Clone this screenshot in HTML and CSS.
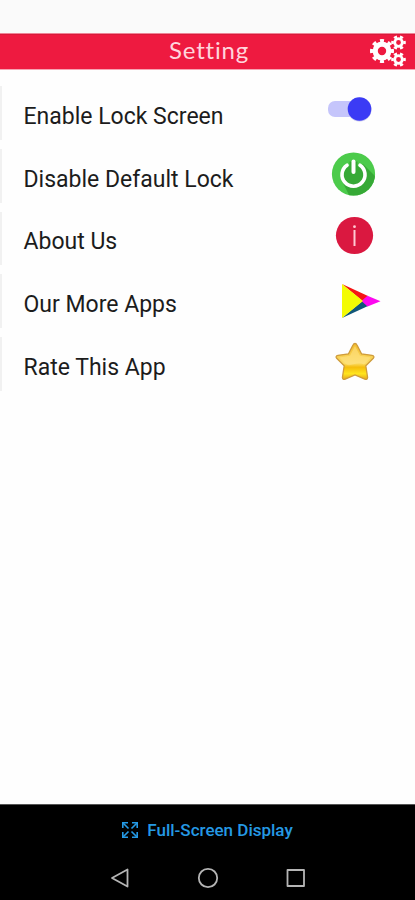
FILE: index.html
```html
<!DOCTYPE html>
<html lang="en">
  <head>
    <meta charset="UTF-8" />
    <meta name="viewport" content="width=device-width, initial-scale=1.0" />
    <title>Setting</title>
    <link rel="stylesheet" href="styles.css">
  </head>
  <body>
    <div class="status-bar"></div>
    <header class="header">
      <h1>Setting</h1>
      <svg class="gears" viewBox="0 0 40 34" fill="none" stroke="#fff">
        <circle cx="13" cy="17" r="6.8" stroke-width="5.2" />
        <circle cx="13" cy="17" r="10.3" stroke-width="3.4" pathLength="16" stroke-dasharray="1 1" stroke-dashoffset="0.5" />
        <circle cx="29.5" cy="8.5" r="3.8" stroke-width="2.8" />
        <circle cx="29.5" cy="8.5" r="6" stroke-width="2.6" pathLength="12" stroke-dasharray="1 1" stroke-dashoffset="0.5" />
        <circle cx="29.5" cy="25.5" r="3.8" stroke-width="2.8" />
        <circle cx="29.5" cy="25.5" r="6" stroke-width="2.6" pathLength="12" stroke-dasharray="1 1" stroke-dashoffset="0.5" />
      </svg>
    </header>

    <main class="settings">
      <div class="row">
        <span class="label">Enable Lock Screen</span>
        <svg class="icon" viewBox="0 0 64 62">
          <rect x="6" y="17" width="36" height="16" rx="7" fill="#c5c5fb" />
          <circle cx="37.5" cy="25.5" r="12" fill="#c9c9ee" />
          <circle cx="37.5" cy="25" r="11.8" fill="#3b3bf5" />
        </svg>
      </div>
      <div class="row">
        <span class="label">Disable Default Lock</span>
        <svg class="icon" viewBox="0 0 64 62">
          <defs>
            <clipPath id="disc"><circle cx="31.5" cy="27" r="21.6" /></clipPath>
          </defs>
          <circle cx="31.5" cy="27" r="21.6" fill="#4ccb4b" />
          <path d="M41 17L64 40V62H34L21 36z" fill="#36a936" clip-path="url(#disc)" />
          <circle cx="31.5" cy="28" r="10" fill="#36a936" />
          <path d="M25 18.2A11.5 11.5 0 1 0 38 18.2" fill="none" stroke="#fff" stroke-width="3.6" stroke-linecap="round" />
          <path d="M31.5 14.5V25" stroke="#36a936" stroke-width="8" />
          <path d="M31.5 14.5V25" stroke="#fff" stroke-width="4" stroke-linecap="round" />
        </svg>
      </div>
      <div class="row">
        <span class="label">About Us</span>
        <svg class="icon" viewBox="0 0 64 62">
          <circle cx="32.5" cy="25.5" r="18.6" fill="#da1840" />
          <path d="M32.5 20V36" stroke="#ffc9d2" stroke-width="2" />
          <circle cx="32.5" cy="16.7" r="1.4" fill="#ffc9d2" />
        </svg>
      </div>
      <div class="row">
        <span class="label">Our More Apps</span>
        <svg class="icon" viewBox="0 0 64 62">
          <path d="M20 11L46 23L40.5 28z" fill="#f51414" />
          <path d="M20 45L46 33L40.5 28z" fill="#115779" />
          <path d="M45.5 22.7L58.5 28.3L45.5 33.5L39.5 28z" fill="#fc08ef" />
          <path d="M20 11L41 28L20 45z" fill="#f3fb03" />
        </svg>
      </div>
      <div class="row">
        <span class="label">Rate This App</span>
        <svg class="icon" viewBox="0 0 64 62">
          <defs>
            <linearGradient id="gold" x1="0" y1="0" x2="0" y2="1">
              <stop offset="0" stop-color="#f3bd2c" />
              <stop offset="0.55" stop-color="#fbdc67" />
              <stop offset="0.66" stop-color="#f5bd0c" />
              <stop offset="0.84" stop-color="#ffe51e" />
              <stop offset="1" stop-color="#e5a71c" />
            </linearGradient>
          </defs>
          <path d="M33 8.5Q34.3 8.5 35 10L39.5 18.8L50 20.3Q53 21 51.3 23.3L43.8 30.8L45.6 42.5Q45.3 45.2 42.8 44.2L33 40L23.2 44.2Q20.7 45.2 20.4 42.5L22.2 30.8L14.7 23.3Q13 21 16 20.3L26.5 18.8L31 10Q31.7 8.5 33 8.5z" fill="url(#gold)" stroke="#cf9c3c" stroke-width="1.3" />
          <path d="M33 11L38 20.7L48.7 22.4L42 29.5C35 26 29 32 24.5 29.5L17.3 22.4L28 20.7z" fill="#ffe488" opacity="0.55" />
        </svg>
      </div>
    </main>

    <footer class="bottom">
      <div class="full-screen">
        <svg class="expand" viewBox="0 0 16 16" fill="none" stroke="#2599e4" stroke-width="1.6">
          <path d="M.8 6V.8H6M10 .8H15.2V6M15.2 10V15.2H10M6 15.2H.8V10" />
          <path d="M1 1L6.5 6.5M15 1L9.5 6.5M15 15L9.5 9.5M1 15L6.5 9.5" />
        </svg>
        <span>Full-Screen Display</span>
      </div>
      <nav class="nav">
        <svg viewBox="0 0 22 22"><path d="M18.5 2.5V19.5L3 11z" /></svg>
        <svg viewBox="0 0 22 22"><circle cx="11" cy="11" r="9.2" /></svg>
        <svg viewBox="0 0 22 22"><rect x="2.5" y="3" width="16.5" height="16" /></svg>
      </nav>
    </footer>
  </body>
</html>
```

FILE: styles.css
```css
body {
  margin: 0;
  height: 900px;
  display: flex;
  flex-direction: column;
  background-color: #fefefe;
  font-family: Roboto, sans-serif;
  overflow: hidden;
}

.status-bar {
  height: 33px;
  background-color: #fafafa;
}

.header {
  height: 37px;
  box-sizing: border-box;
  display: flex;
  align-items: flex-start;
  justify-content: flex-end;
  background-color: #ee1a40;
  border-top: 1px solid #ee8496;
  border-bottom: 1px solid #f7a3b2;
  box-shadow: inset 0 1px #d9193a;
}

h1 {
  width: 83px;
  margin: 0 117px 0 0;
  color: #ffd5dc;
  font-family: Lato, sans-serif;
  font-size: 24px;
  font-weight: 400;
  line-height: 32px;
  letter-spacing: 0.8px;
  white-space: nowrap;
}

.gears {
  width: 40px;
  height: 34px;
  margin-right: 6px;
}

.settings {
  flex: 1;
  padding-top: 14px;
}

.row {
  height: 62.75px;
  display: flex;
  align-items: center;
  justify-content: space-between;
  padding: 0 29px 0 21.5px;
  border-style: solid;
  border-width: 0 0 0 2px;
  border-image: linear-gradient(#fefefe 3px, #f1f1f1 3px, #f1f1f1 55px, #fefefe 55px) 1;
}

.label {
  padding-top: 3px;
  color: #1c1c1c;
  font-size: 23px;
  line-height: 30px;
  white-space: nowrap;
}

.icon {
  width: 64px;
  height: 62px;
}

.bottom {
  height: 96px;
  box-sizing: border-box;
  border-top: 1px solid #555;
  background-color: #000;
}

.full-screen {
  height: 49px;
  display: flex;
  align-items: center;
  justify-content: center;
  gap: 9px;
  color: #2599e4;
  font-size: 17px;
  font-weight: 500;
}

.expand {
  width: 16px;
  height: 16px;
}

.nav {
  display: flex;
  justify-content: center;
  gap: 66px;
  padding-top: 13px;
}

.nav svg {
  width: 22px;
  height: 22px;
  fill: none;
  stroke: #b5b5b5;
  stroke-width: 1.8;
  stroke-linejoin: round;
}
```
